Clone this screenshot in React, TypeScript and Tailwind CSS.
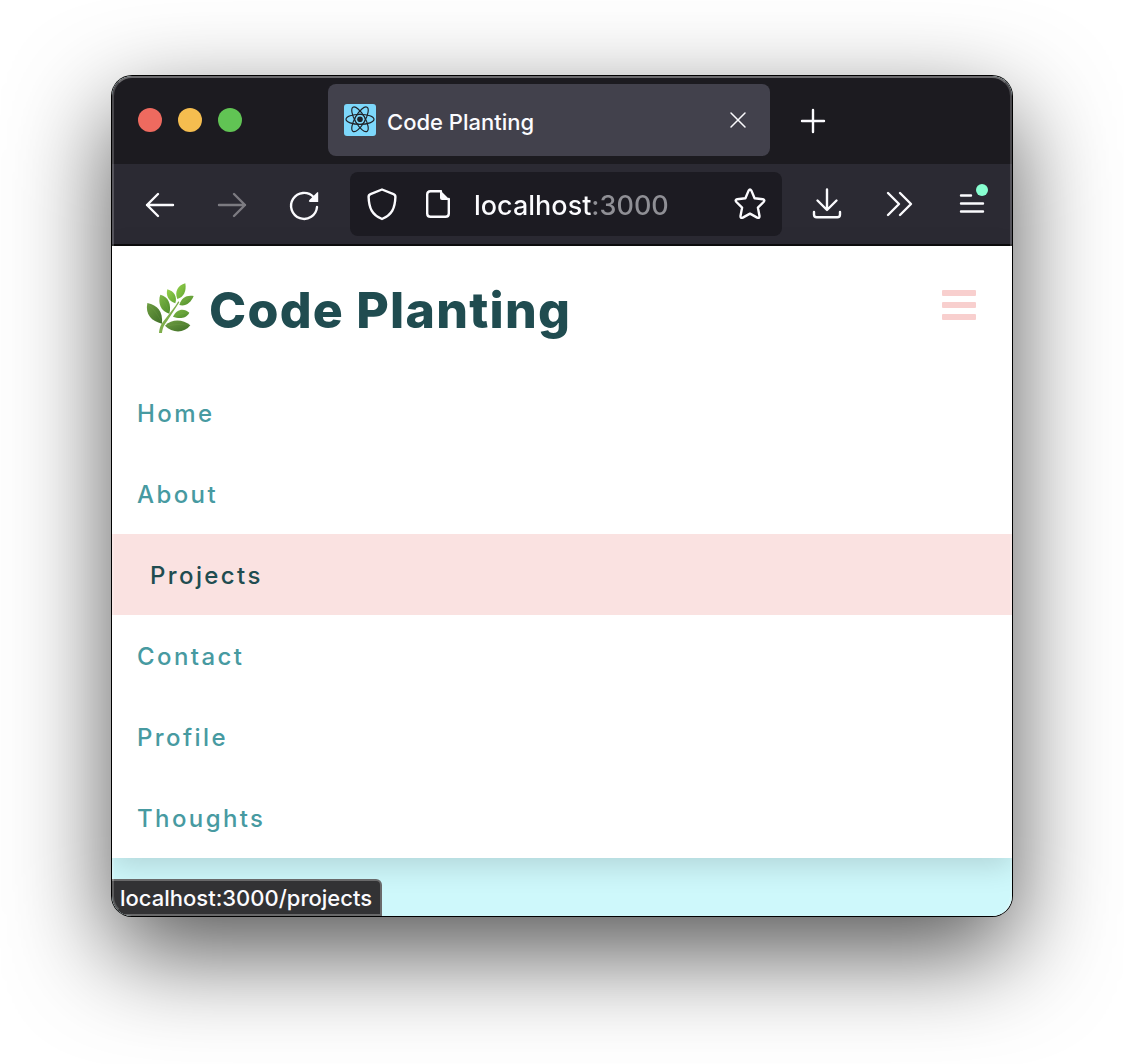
import React, { useState } from "react";

const links = ["Home", "About", "Projects", "Contact", "Profile", "Thoughts"];

type IconProps = { children: React.ReactNode; className?: string };

function Icon({ children, className = "" }: IconProps) {
  return (
    <svg
      viewBox="0 0 32 32"
      className={`size-8 shrink-0 overflow-visible ${className}`}
      fill="none"
      stroke="currentColor"
      strokeWidth="2.4"
      strokeLinecap="round"
      strokeLinejoin="round"
      aria-hidden="true"
    >
      {children}
    </svg>
  );
}

function ReactFavicon() {
  return (
    <svg viewBox="0 0 32 32" className="size-8 shrink-0" aria-hidden="true">
      <rect width="32" height="32" rx="3" fill="#7dd7fb" />
      <g fill="none" stroke="#20232a" strokeWidth="1.2">
        <ellipse cx="16" cy="15.3" rx="14" ry="5" />
        <ellipse cx="16" cy="15.3" rx="14" ry="5" transform="rotate(60 16 15.3)" />
        <ellipse cx="16" cy="15.3" rx="14" ry="5" transform="rotate(120 16 15.3)" />
        <circle cx="16" cy="15.3" r="5.2" strokeWidth="0.8" />
      </g>
      <circle cx="16" cy="15.3" r="2.8" fill="#20232a" />
    </svg>
  );
}

function Herb() {
  return (
    <svg viewBox="0 0 150 156" className="h-[52px] w-[50px] shrink-0" aria-hidden="true">
      <defs>
        <linearGradient id="leafDark" x1="0" y1="0" x2="1" y2="1">
          <stop offset="0" stopColor="#6f9f42" />
          <stop offset="1" stopColor="#3f6e27" />
        </linearGradient>
        <linearGradient id="leafMid" x1="0" y1="0" x2="1" y2="1">
          <stop offset="0" stopColor="#7db745" />
          <stop offset="1" stopColor="#4f8c2b" />
        </linearGradient>
        <linearGradient id="leafLight" x1="0" y1="0" x2="1" y2="1">
          <stop offset="0" stopColor="#95d14c" />
          <stop offset="1" stopColor="#62a632" />
        </linearGradient>
      </defs>
      <path d="M7 63C38 70 54 88 51 125C20 118 0 98 7 63Z" fill="url(#leafDark)" />
      <path d="M46 38C70 44 80 66 73 95C48 88 37 63 46 38Z" fill="url(#leafMid)" />
      <path d="M67 22C88 28 97 44 91 64C70 58 62 40 67 22Z" fill="url(#leafLight)" />
      <path d="M121 4C125 28 116 46 97 51C88 30 98 10 121 4Z" fill="url(#leafLight)" />
      <path d="M146 42C138 62 122 74 103 69C109 46 126 38 146 42Z" fill="url(#leafMid)" />
      <path d="M133 92C122 112 100 110 84 104C94 82 116 76 133 92Z" fill="url(#leafMid)" />
      <path d="M136 130C118 154 82 154 60 131C82 109 114 112 136 130Z" fill="url(#leafDark)" />
      <g fill="none" stroke="#b4d77c" strokeLinecap="round" strokeWidth="1" opacity="0.25">
        <path d="M12 69Q34 88 49 119" />
        <path d="M49 43Q64 62 72 90" />
        <path d="M70 27Q82 42 89 61" />
        <path d="M118 9Q110 30 99 48" />
        <path d="M141 45Q122 52 106 65" />
        <path d="M127 92Q106 94 87 103" />
        <path d="M130 129Q96 125 66 131" />
      </g>
      <path
        d="M42 153C44 135 47 127 59 113L91 72L100 58L103 61L67 116C56 130 53 138 51 153Z"
        fill="#7fae4c"
      />
    </svg>
  );
}

function TitleBar() {
  return (
    <div className="flex h-[88px] items-center bg-[#1c1b20] pr-4 pl-[26px]">
      <div className="mr-[86px] flex shrink-0 gap-4">
        <button aria-label="Close window" className="size-6 rounded-full bg-[#ee6a5f]" />
        <button aria-label="Minimize window" className="size-6 rounded-full bg-[#f5bd4f]" />
        <button aria-label="Zoom window" className="size-6 rounded-full bg-[#61c454]" />
      </div>
      <div className="flex h-[72px] max-w-[442px] min-w-0 flex-1 items-center rounded-lg bg-[#42414c] px-4">
        <ReactFavicon />
        <span className="ml-[11px] flex-1 truncate pt-1 text-[22px] leading-8 font-medium text-[#fbfbfe]">
          Code Planting
        </span>
        <button aria-label="Close tab" className="text-[#fbfbfe]">
          <Icon>
            <path d="M9 9L23 23M23 9L9 23" strokeWidth="1.5" />
          </Icon>
        </button>
      </div>
      <button aria-label="New tab" className="ml-[27px] pt-0.5 text-[#fbfbfe]">
        <Icon>
          <path d="M16 5V27M5 16H27" strokeWidth="2.4" />
        </Icon>
      </button>
    </div>
  );
}

function ToolBar() {
  const [address, setAddress] = useState("localhost:3000");
  return (
    <div className="flex h-[82px] items-center border-b-2 border-[#0c0c0d] bg-[#2b2a33] pr-[25px] pl-8 text-[#fbfbfe]">
      <div className="mr-[30px] flex shrink-0 gap-10 pt-0.5">
        <button aria-label="Back">
          <Icon>
            <path d="M3 16H29M14 5L3 16L14 27" />
          </Icon>
        </button>
        <button aria-label="Forward" disabled className="text-[#7c7b81]">
          <Icon>
            <path d="M3 16H29M18 5L29 16L18 27" />
          </Icon>
        </button>
        <button aria-label="Reload">
          <Icon>
            <path d="M29 18A13 13 0 1 1 25.5 8" />
            <path d="M30.2 3.4V13H21.8Q20 12.4 21.4 11L29 3.6Q30.2 2.4 30.2 3.4Z" fill="currentColor" stroke="none" />
          </Icon>
        </button>
      </div>
      <div className="flex h-16 min-w-0 flex-1 items-center rounded-lg bg-[#1c1b22] px-4">
        <Icon>
          <path d="M16 1.5L27.5 6.2Q29.5 7 29.4 9C29 20 26 27 16 31C6 27 3 20 2.6 9Q2.5 7 4.5 6.2Z" />
        </Icon>
        <Icon className="ml-6">
          <path d="M19 3.2H8.5Q5.2 3.2 5.2 6.5V25.5Q5.2 28.8 8.5 28.8H23.5Q26.8 28.8 26.8 25.5V11" />
          <path d="M18 2L28 12H20Q18 12 18 10Z" fill="currentColor" stroke="none" />
        </Icon>
        <input
          aria-label="Address"
          value={address}
          onChange={(e) => setAddress(e.target.value)}
          className="ml-5 min-w-0 flex-1 bg-linear-to-r from-[#fbfbfe] from-[117px] to-[#8f8f95] to-[117px] bg-clip-text pt-1 text-[27px] leading-8 font-medium text-transparent caret-white outline-none"
        />
        <button aria-label="Bookmark this page">
          <Icon>
            <path d="M14.6 2.6Q16 .4 17.4 2.6L20.6 10.2L28.8 11.2Q31.4 12 29.6 14L23.9 19.6L25.5 28Q25.6 30.5 23.2 29.6L16 25.6L8.8 29.6Q6.4 30.5 6.5 28L8.1 19.6L2.4 14Q.6 12 3.2 11.2L11.4 10.2Z" />
          </Icon>
        </button>
      </div>
      <div className="ml-[29px] flex shrink-0 gap-10">
        <button aria-label="Downloads">
          <Icon>
            <path d="M16 1.5V21.5M6.5 12.5L16 22L25.5 12.5M3 24V26.5Q3 29.2 5.7 29.2H26.3Q29 29.2 29 26.5V24" />
          </Icon>
        </button>
        <button aria-label="More tools">
          <Icon>
            <path d="M5 5L16 16L5 27M17 5L28 16L17 27" />
          </Icon>
        </button>
        <button aria-label="Open application menu">
          <Icon>
            <path d="M6 7.5H16M6 15.5H28M6 23.5H28" />
            <circle cx="27" cy="2" r="6" fill="#88ffd1" stroke="none" />
          </Icon>
        </button>
      </div>
    </div>
  );
}

export default function App() {
  const [open, setOpen] = useState(true);
  return (
    <div className="min-h-screen overflow-hidden bg-white px-28 pt-[76px] pb-[148px] font-['Inter',sans-serif]">
      <div className="relative rounded-[20px] shadow-[0_0_0_1px_#000,0_36px_100px_rgba(0,0,0,0.68)]">
        <div className="overflow-hidden rounded-[20px] bg-[#cef8fb]">
          <TitleBar />
          <ToolBar />
          <nav className="bg-white shadow-[0_8px_28px_rgba(0,0,0,0.14)]">
            <div className="flex h-[126px] items-center justify-between pr-9 pb-0.5 pl-[33px]">
              <a href="#home" className="flex items-center gap-[14px] text-[#204c50]">
                <Herb />
                <h1 className="pt-1 text-[50px] leading-[60px] font-extrabold tracking-wide">
                  Code Planting
                </h1>
              </a>
              <button
                aria-label="Toggle menu"
                aria-expanded={open}
                onClick={() => setOpen(!open)}
                className="flex w-[34px] flex-col gap-1.5 pb-1.5"
              >
                <span className="h-1.5 w-full rounded-[1px] bg-[#f8cfce]" />
                <span className="h-1.5 w-full rounded-[1px] bg-[#f8cfce]" />
                <span className="h-1.5 w-full rounded-[1px] bg-[#f8cfce]" />
              </button>
            </div>
            {open && (
              <ul className="text-[24px] leading-[33px] font-medium tracking-widest">
                {links.map((name) => (
                  <li key={name}>
                    <a
                      href={`#${name.toLowerCase()}`}
                      className={
                        name === "Projects"
                          ? "block bg-[#fae2e1] pt-[25px] pb-[23px] pl-[38px] text-[#204c50]"
                          : "block pt-[25px] pb-[23px] pl-[25px] text-[#479aa1]"
                      }
                    >
                      {name}
                    </a>
                  </li>
                ))}
              </ul>
            )}
          </nav>
          <div className="flex h-[58px] items-end">
            <div className="relative rounded-tr-md border-2 border-l-0 border-[#69696a] bg-[#323234] px-2 pt-0.5 text-[22px] leading-[31px] font-medium text-[#fbfbfe]">
              localhost:3000/projects
            </div>
          </div>
        </div>
        <div className="pointer-events-none absolute inset-0 rounded-[20px] border-2 border-t-white/35 border-r-white/20 border-b-transparent border-l-white/20" />
      </div>
    </div>
  );
}
